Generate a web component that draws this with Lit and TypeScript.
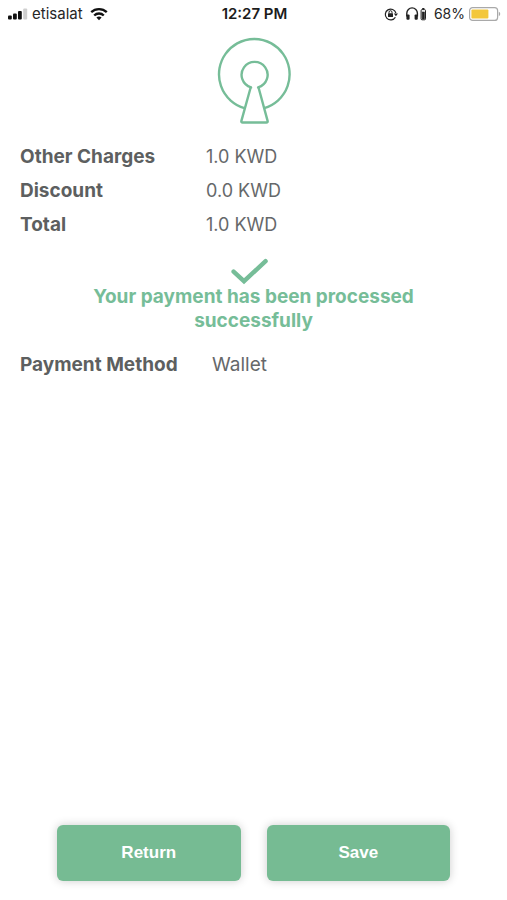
import { LitElement, html, css } from "lit";
import { customElement } from "lit/decorators.js";

@customElement("status-bar")
class StatusBar extends LitElement {
  static styles = css`
    :host {
      display: grid;
      grid-template-columns: 1fr auto 1fr;
      align-items: center;
      height: 28px;
      padding: 0 6px 0 8px;
      font-size: 15px;
      line-height: 20px;
      color: #262626;
    }
    .side {
      display: flex;
      align-items: center;
    }
    .carrier {
      margin: 0 7px 0 4px;
    }
    .time {
      font-weight: 600;
      color: #1c1c1c;
    }
    .right {
      justify-content: flex-end;
    }
    .lock {
      margin-right: 7px;
    }
    .percent {
      margin: 0 4px 0 7px;
      font-size: 14px;
    }
    svg {
      display: block;
      flex: none;
    }
  `;

  render() {
    return html`
      <div class="side">
        <svg width="20" height="12" viewBox="0 0 20 12" aria-label="Signal">
          <rect x="0" y="7.5" width="3.8" height="4" rx="1" fill="#111" />
          <rect x="5" y="5.5" width="3.8" height="6" rx="1" fill="#111" />
          <rect x="10" y="3" width="3.8" height="8.5" rx="1" fill="#111" />
          <rect x="15.2" y="0.5" width="4" height="11" rx="1" fill="#cfcfcf" />
        </svg>
        <span class="carrier">etisalat</span>
        <svg width="18" height="14" viewBox="0 0 18 14" fill="none" stroke="#111" stroke-width="2.3" aria-label="Wi-Fi">
          <path d="M1.2 5.2a11.2 11.2 0 0 1 15.6 0" />
          <path d="M4.2 8.5a6.8 6.8 0 0 1 9.6 0" />
          <path d="M6.4 10.6a3.8 3.8 0 0 1 5.2 0L9 13.2z" fill="#111" stroke="none" />
        </svg>
      </div>
      <span class="time">12:27 PM</span>
      <div class="side right">
        <svg class="lock" width="14" height="14" viewBox="0 0 14 14" fill="none" stroke="#222" aria-label="Orientation lock">
          <path d="M11.4 10.2A5.4 5.4 0 1 1 11.9 6" stroke-width="1.2" />
          <path d="M9.8 6.4h4.2l-2.1 2.8z" fill="#222" stroke="none" />
          <rect x="4" y="6.2" width="5" height="3.8" rx="0.6" fill="#222" stroke="none" />
          <path d="M5 6.4V5.2a1.5 1.5 0 0 1 3 0v1.2" stroke-width="1" />
        </svg>
        <svg width="22" height="14" viewBox="0 0 22 14" fill="none" stroke="#222" aria-label="Headphones battery">
          <path d="M1.8 9.5V6.2a5.3 5.3 0 0 1 10.6 0v3.3" stroke-width="1.4" />
          <rect x="1.4" y="7.4" width="3.2" height="5.4" rx="1.1" fill="#222" stroke="none" />
          <rect x="9.6" y="7.4" width="3.2" height="5.4" rx="1.1" fill="#222" stroke="none" />
          <rect x="16.1" y="2.6" width="4.4" height="10.2" rx="1" stroke-width="1" />
          <rect x="17.2" y="5" width="2.2" height="7" fill="#222" stroke="#222" stroke-width="0.6" />
          <rect x="17.2" y="1" width="2.2" height="1.4" fill="#222" stroke="none" />
        </svg>
        <span class="percent">68%</span>
        <svg width="32" height="14" viewBox="0 0 32 14" aria-label="Battery">
          <rect x="0.6" y="0.6" width="28" height="12.8" rx="3" fill="#fff" stroke="#a9a9a9" stroke-width="1.2" />
          <rect x="2.4" y="2.4" width="17" height="9.2" rx="1" fill="#f3c73c" />
          <path d="M29.8 4.8a2.4 2.4 0 0 1 0 4.4z" fill="#a9a9a9" />
        </svg>
      </div>
    `;
  }
}

@customElement("app-root")
class AppRoot extends LitElement {
  static styles = css`
    :host {
      display: flex;
      flex-direction: column;
      min-height: 100vh;
      box-sizing: border-box;
      background: #fff;
      color: #5d5f60;
      font-family: Inter, "Liberation Sans", sans-serif;
      font-size: 19px;
      line-height: 24px;
    }
    main {
      flex: 1;
      display: flex;
      flex-direction: column;
    }
    svg {
      display: block;
    }
    .logo {
      margin: 9px auto 0;
    }
    dl {
      display: grid;
      grid-template-columns: 186px 1fr;
      row-gap: 10px;
      margin: 20px 20px 0;
    }
    dl.method {
      grid-template-columns: 192px 1fr;
    }
    dt {
      font-weight: 700;
    }
    dd {
      margin: 0;
      font-weight: 400;
      color: #66686a;
    }
    .charges dd {
      font-size: 18px;
    }
    .check {
      margin: 20px auto 0;
    }
    .message {
      width: 72%;
      margin: 0 auto;
      text-align: center;
      font-weight: 700;
      color: #76bd98;
    }
    footer {
      display: flex;
      gap: 26px;
      padding: 0 57px 19px;
    }
    button {
      flex: 1;
      height: 56px;
      border: 0;
      border-radius: 6px;
      background: #76bb93;
      color: #fff;
      font: bold 17px/24px "Liberation Sans", sans-serif;
      box-shadow: 0 0 10px rgba(0, 0, 0, 0.2);
    }
  `;

  render() {
    const charges = [
      ["Other Charges", "1.0 KWD"],
      ["Discount", "0.0 KWD"],
      ["Total", "1.0 KWD"],
    ];
    return html`
      <status-bar></status-bar>
      <main>
        <svg class="logo" width="74" height="88" viewBox="0 0 74 88" fill="none" stroke="#76bd98" stroke-width="2.4" stroke-linejoin="round" aria-label="Logo">
          <path d="M27.4 71.2A35.3 35.3 0 1 1 47.2 71.2" />
          <path d="M35 50 34 50.4A13 13 0 1 1 41.2 50.4L40.2 50" />
          <path d="M33.8 50 24.4 83.9Q24 85.5 25.6 85.5H49.4Q51 85.5 50.6 83.9L41.4 50" />
        </svg>
        <dl class="charges">${charges.map(([label, value]) => html`<dt>${label}</dt><dd>${value}</dd>`)}</dl>
        <svg class="check" width="46" height="28" viewBox="0 0 46 28" fill="none" stroke="#76bd98" stroke-width="4.4" stroke-linecap="round" aria-label="Done">
          <path d="M2.6 14.6 13 24.2 34.6 4.2" />
        </svg>
        <div class="message" role="status">Your payment has been processed successfully</div>
        <dl class="method"><dt>Payment Method</dt><dd>Wallet</dd></dl>
      </main>
      <footer>
        <button type="button">Return</button>
        <button type="button">Save</button>
      </footer>
    `;
  }
}
